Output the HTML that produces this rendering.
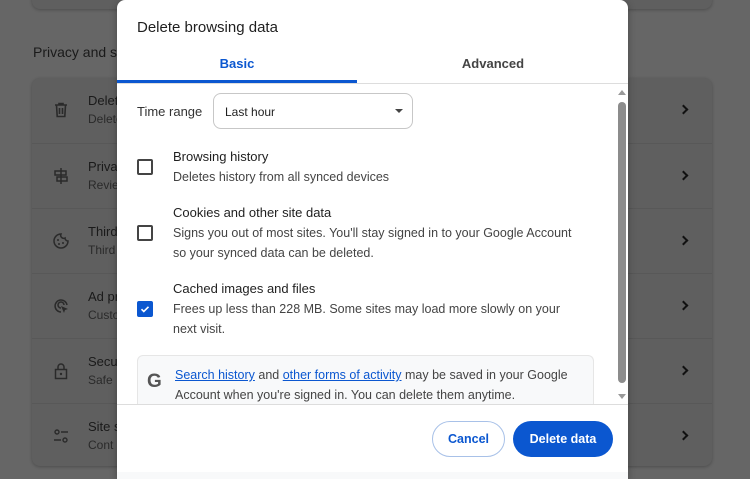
<!DOCTYPE html>
<html><head><style>
*{margin:0;padding:0;box-sizing:border-box}
body{width:750px;height:479px;overflow:hidden;background:#666;font-family:"Liberation Sans",Arial,sans-serif;position:relative}
.card{position:absolute;left:32px;width:680px;background:#5f5f5f;border-radius:8px;box-shadow:0 1px 3px rgba(0,0,0,.25)}
.row{position:absolute;left:0;width:680px;height:65px;border-top:1px solid #585858}
.row .ic{position:absolute;left:20px;top:23px;width:18px;height:18px;color:#333}
.row .t1{position:absolute;left:56px;top:15px;font-size:13px;color:#1a1a1a}
.row .t2{position:absolute;left:56px;top:34px;font-size:12px;color:#2a2a2a}
.chev{position:absolute;right:25px;top:28px;width:7px;height:7px;border-right:2px solid #111;border-top:2px solid #111;transform:rotate(45deg)}
.dlg{position:absolute;left:117px;top:0;width:511px;height:479px;background:#fff;border-radius:8px 8px 0 0;box-shadow:0 2px 8px rgba(0,0,0,.3)}
.abs{position:absolute}
.cb{position:absolute;left:20px;width:16px;height:16px;border:2px solid #444;border-radius:2px}
.lbl{position:absolute;left:56px;font-size:13px;color:#1f1f1f;line-height:20px}
.sub{color:#444}
a{color:#0b57d0;text-decoration:underline}
</style></head><body>
<div class="card" style="top:-10px;height:19px"></div>
<div class="abs" style="left:33px;top:44px;font-size:14px;color:#1a1a1a">Privacy and security</div>
<div class="card" style="top:78px;height:388px">
 <div class="row" style="top:0;border-top:none"><svg class="ic" viewBox="0 0 18 18"><path d="M3 4h12M7 4V2.5h4V4M4.5 4l.7 11.5h7.6L13.5 4M7.5 7v6M10.5 7v6" fill="none" stroke="#2a2a2a" stroke-width="1.6"/></svg><div class="t1">Delete browsing data</div><div class="t2">Delete history</div><div class="chev"></div></div>
 <div class="row" style="top:65px"><svg class="ic" viewBox="0 0 18 18"><path d="M9 1v16M3 4h11v4H3zM5 10h10v4H5z" fill="none" stroke="#2a2a2a" stroke-width="1.5"/></svg><div class="t1">Privacy guide</div><div class="t2">Review</div><div class="chev"></div></div>
 <div class="row" style="top:130px"><svg class="ic" viewBox="0 0 18 18"><path d="M9 2a7 7 0 1 0 7 7 3 3 0 0 1-3-3 3 3 0 0 1-4-4z" fill="none" stroke="#2a2a2a" stroke-width="1.5"/><circle cx="6" cy="8" r="1" fill="#2a2a2a"/><circle cx="7" cy="12" r="1" fill="#2a2a2a"/><circle cx="11" cy="11" r="1" fill="#2a2a2a"/></svg><div class="t1">Third-party cookies</div><div class="t2">Third</div><div class="chev"></div></div>
 <div class="row" style="top:195px"><svg class="ic" viewBox="0 0 18 18"><path d="M15 8a6 6 0 1 0-6 7M12 8a3 3 0 1 0-3 3" fill="none" stroke="#2a2a2a" stroke-width="1.5"/><path d="M9 9l7 3-3 1-1 3z" fill="#2a2a2a"/></svg><div class="t1">Ad privacy</div><div class="t2">Custo</div><div class="chev"></div></div>
 <div class="row" style="top:260px"><svg class="ic" viewBox="0 0 18 18"><rect x="3.5" y="7.5" width="11" height="9" fill="none" stroke="#2a2a2a" stroke-width="1.5"/><path d="M6 7.5V5a3 3 0 0 1 6 0v2.5" fill="none" stroke="#2a2a2a" stroke-width="1.5"/><circle cx="9" cy="12" r="1.2" fill="#2a2a2a"/></svg><div class="t1">Security</div><div class="t2">Safe</div><div class="chev"></div></div>
 <div class="row" style="top:325px"><svg class="ic" viewBox="0 0 18 18"><circle cx="5" cy="5" r="2" fill="none" stroke="#2a2a2a" stroke-width="1.4"/><path d="M9 5h7M2 13h7" stroke="#2a2a2a" stroke-width="1.4"/><circle cx="13" cy="13" r="2" fill="none" stroke="#2a2a2a" stroke-width="1.4"/></svg><div class="t1">Site settings</div><div class="t2">Cont</div><div class="chev"></div></div>
</div>

<div class="dlg">
 <div class="abs" style="left:20px;top:19px;font-size:15px;color:#1f1f1f">Delete browsing data</div>
 <div class="abs" style="left:0;top:56px;width:240px;text-align:center;font-size:13px;font-weight:bold;color:#0b57d0">Basic</div>
 <div class="abs" style="left:256px;top:56px;width:240px;text-align:center;font-size:13px;font-weight:bold;color:#444">Advanced</div>
 <div class="abs" style="left:0;top:80px;width:240px;height:3px;background:#0b57d0"></div>
 <div class="abs" style="left:0;top:83px;width:511px;height:1px;background:#ddd"></div>

 <div class="abs" style="left:20px;top:104px;font-size:13px;color:#333">Time range</div>
 <div class="abs" style="left:96px;top:93px;width:200px;height:36px;border:1px solid #c7c7c7;border-radius:8px"><span class="abs" style="left:11px;top:11px;font-size:12px;color:#1f1f1f">Last hour</span><span class="abs" style="left:181px;top:15px;border-left:4px solid transparent;border-right:4px solid transparent;border-top:4px solid #444"></span></div>

 <div class="cb" style="top:159px"></div>
 <div class="lbl" style="top:147px">Browsing history<br><span class="sub" style="font-size:12.5px">Deletes history from all synced devices</span></div>
 <div class="cb" style="top:225px"></div>
 <div class="lbl" style="top:203px">Cookies and other site data<br><span class="sub" style="font-size:12.5px">Signs you out of most sites. You'll stay signed in to your Google Account<br>so your synced data can be deleted.</span></div>
 <div class="cb" style="top:301px;background:#0b57d0;border-color:#0b57d0"><svg width="12" height="12" viewBox="0 0 12 12" style="position:absolute;left:0;top:0"><path d="M2.5 6.2l2.3 2.3 4.7-4.7" fill="none" stroke="#fff" stroke-width="1.6"/></svg></div>
 <div class="lbl" style="top:279px">Cached images and files<br><span class="sub" style="font-size:12.5px">Frees up less than 228 MB. Some sites may load more slowly on your<br>next visit.</span></div>

 <div class="abs" style="left:20px;top:355px;width:457px;height:50px;background:#f8f9fa;border:1px solid #e6e6e6;border-bottom:none;border-radius:6px 6px 0 0">
  <span class="abs" style="left:9px;top:15px;font-size:19px;font-weight:bold;color:#555">G</span>
  <div class="abs" style="left:37px;top:9px;font-size:12.5px;line-height:20px;color:#444"><a>Search history</a> and <a>other forms of activity</a> may be saved in your Google<br>Account when you're signed in. You can delete them anytime.</div>
 </div>
 <div class="abs" style="left:500px;top:86px;width:10px;height:318px">
  <span class="abs" style="left:1px;top:4px;border-left:4px solid transparent;border-right:4px solid transparent;border-bottom:5px solid #999"></span>
  <div class="abs" style="left:1px;top:16px;width:8px;height:281px;background:#8c8c8c;border-radius:4px"></div>
  <span class="abs" style="left:1px;top:308px;border-left:4px solid transparent;border-right:4px solid transparent;border-top:5px solid #999"></span>
 </div>
 <div class="abs" style="left:0;top:404px;width:511px;height:1px;background:#ddd"></div>
 <div class="abs" style="left:315px;top:421px;width:73px;height:36px;border:1px solid #a8c1e8;border-radius:18px;text-align:center;line-height:34px;font-size:12.5px;font-weight:bold;color:#0b57d0">Cancel</div>
 <div class="abs" style="left:396px;top:421px;width:100px;height:36px;background:#0b57d0;border-radius:18px;text-align:center;line-height:36px;font-size:12.5px;font-weight:bold;color:#fff">Delete data</div>
 <div class="abs" style="left:0;top:472px;width:511px;height:7px;background:#f8f9fa"></div>
</div>
</body></html>
